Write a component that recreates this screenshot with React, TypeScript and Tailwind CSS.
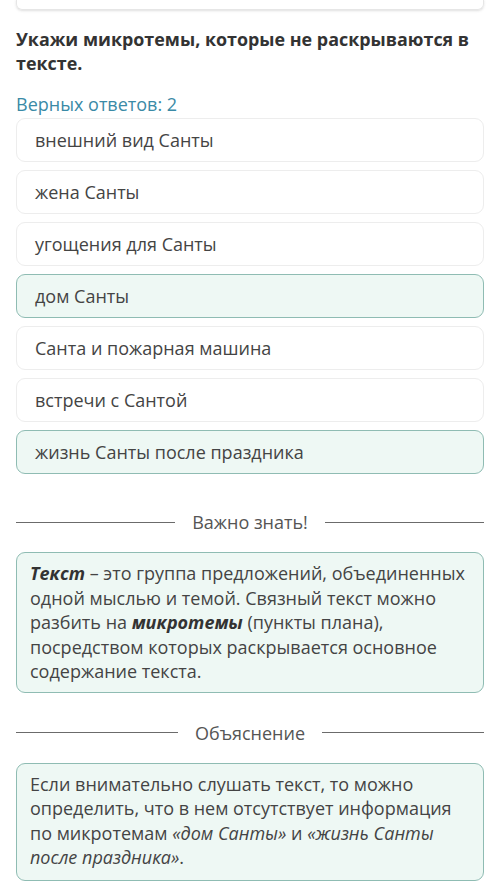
import React from 'react';

const options = [
    { text: 'внешний вид Санты', picked: false },
    { text: 'жена Санты', picked: false },
    { text: 'угощения для Санты', picked: false },
    { text: 'дом Санты', picked: true },
    { text: 'Санта и пожарная машина', picked: false },
    { text: 'встречи с Сантой', picked: false },
    { text: 'жизнь Санты после праздника', picked: true },
];

const Divider: React.FC<{ label: string }> = ({ label }) => (
    <div className="flex items-center gap-[17px] h-[24px]">
        <div className="flex-1 h-px bg-[#6b6b6b]" />
        <span className="text-[18px] text-[#555] leading-none">{label}</span>
        <div className="flex-1 h-px bg-[#6b6b6b]" />
    </div>
);

export default function App() {
    return (
        <div className="w-[500px] h-[886px] overflow-hidden bg-white px-4 text-[#444]" style={{ fontFamily: '"Open Sans", "Noto Sans", sans-serif' }}>
            <div className="h-[11px] -mt-px border border-t-0 border-[#e6e6e6] rounded-b-md shadow-sm" />
            <h1 className="mt-[17px] text-[17.9px] font-bold leading-[24px] text-[#333]">
                Укажи микротемы, которые не раскрываются в тексте.
            </h1>
            <p className="mt-[18px] text-[18px] leading-[22px] text-[#3a8aa6]">Верных ответов: 2</p>
            <div className="mt-[3px] flex flex-col gap-[8px]">
                {options.map(o => (
                    <div
                        key={o.text}
                        className={`h-[44px] flex items-center pl-[18px] rounded-[9px] border text-[18px] ${o.picked ? 'bg-[#eef8f4] border-[#8fbcb3]' : 'bg-white border-[#ededed]'}`}
                    >
                        {o.text}
                    </div>
                ))}
            </div>
            <div className="mt-[36px]">
                <Divider label="Важно знать!" />
            </div>
            <div className="mt-[18px] bg-[#eef8f4] border border-[#8fbcb3] rounded-[9px] pl-[13px] pr-[14px] pt-[8px] pb-[8px] text-[18px] leading-[24.5px]">
                <b className="italic text-[#333]">Текст</b> – это группа предложений, объединенных одной мыслью и темой. Связный текст можно разбить на <b className="italic text-[#333]">микротемы</b> (пункты плана), посредством которых раскрывается основное содержание текста.
            </div>
            <div className="mt-[28px]">
                <Divider label="Объяснение" />
            </div>
            <div className="mt-[18px] bg-[#eef8f4] border border-[#8fbcb3] rounded-[9px] pl-[13px] pr-[14px] pt-[8px] pb-[10px] text-[18px] leading-[24.5px]">
                Если внимательно слушать текст, то можно определить, что в нем отсутствует информация по микротемам <i>«дом Санты»</i> и <i>«жизнь Санты после праздника»</i>.
            </div>
        </div>
    );
}
